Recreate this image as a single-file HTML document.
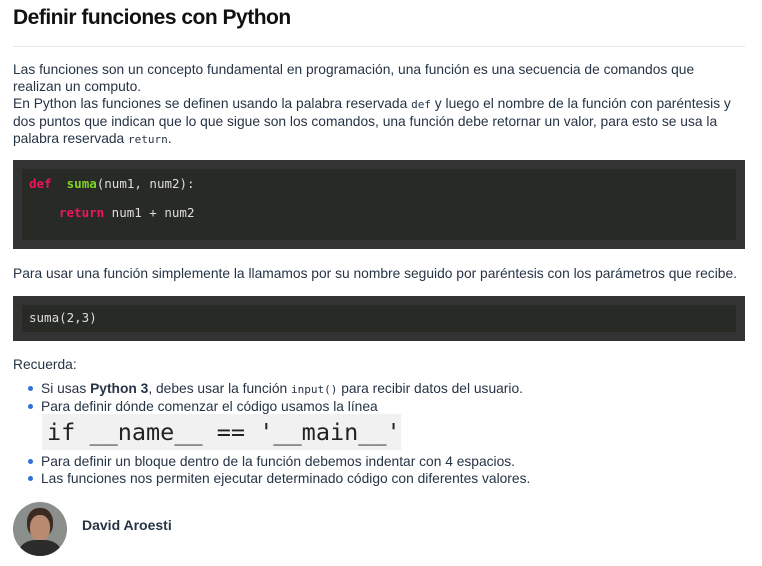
<!DOCTYPE html>
<html><head><style>
body{margin:0;width:762px;height:566px;background:#fff;font-family:"Liberation Sans",sans-serif;color:#263445;overflow:hidden;position:relative}
.a{position:absolute}
p{margin:0;font-size:13.8px;line-height:17px}
code{font-family:"DejaVu Sans Mono",monospace;font-size:11px}
.box{position:absolute;left:13px;width:732px;background:#333}
.in{position:absolute;left:9px;right:9px;background:#282a26;font-family:"DejaVu Sans Mono",monospace;font-size:12.5px;color:#ddd}
.k{color:#f0145a;font-weight:bold}.f{color:#7fd324;font-weight:bold}
li{font-size:13.8px;line-height:17px}
ul{margin:0;padding:0;list-style:none}
li:before{content:"";display:inline-block;width:5px;height:5px;border-radius:50%;background:#2f6fd8;margin:0 8px 2px 0;vertical-align:middle}
</style></head><body>
<div class="a" style="left:13px;top:6px;font-size:21px;font-weight:bold;color:#111;letter-spacing:-0.5px">Definir funciones con Python</div>
<div class="a" style="left:13px;top:46px;width:732px;height:1px;background:#e6e6e6"></div>
<p class="a" style="left:13px;top:61px;width:732px">Las funciones son un concepto fundamental en programación, una función es una secuencia de comandos que<br>realizan un computo.<br>En Python las funciones se definen usando la palabra reservada <code>def</code> y luego el nombre de la función con paréntesis y<br>dos puntos que indican que lo que sigue son los comandos, una función debe retornar un valor, para esto se usa la<br>palabra reservada <code>return</code>.</p>
<div class="box" style="top:160px;height:89px"><div class="in" style="top:9px;height:71px">
<div class="a" style="left:7px;top:7px;white-space:pre"><span class="k">def</span>  <span class="f">suma</span>(num1, num2):</div>
<div class="a" style="left:37px;top:36px;white-space:pre"><span class="k">return</span> num1 + num2</div>
</div></div>
<p class="a" style="left:13px;top:265px;white-space:nowrap">Para usar una función simplemente la llamamos por su nombre seguido por paréntesis con los parámetros que recibe.</p>
<div class="box" style="top:296px;height:45px"><div class="in" style="top:9px;height:27px">
<div class="a" style="left:7px;top:5px">suma(2,3)</div></div></div>
<p class="a" style="left:13px;top:356px">Recuerda:</p>
<ul class="a" style="left:28px;top:380px;white-space:nowrap">
<li>Si usas <b>Python 3</b>, debes usar la función <code>input()</code> para recibir datos del usuario.</li>
<li>Para definir dónde comenzar el código usamos la línea</li>
</ul>
<div class="a" style="left:42px;top:414px;width:359px;height:36px;background:#f1f1f1;font-family:'DejaVu Sans Mono',monospace;font-size:23.5px;line-height:36px;color:#222;padding-left:5px;box-sizing:border-box;white-space:pre">if __name__ == '__main__'</div>
<ul class="a" style="left:28px;top:453px;white-space:nowrap">
<li>Para definir un bloque dentro de la función debemos indentar con 4 espacios.</li>
<li>Las funciones nos permiten ejecutar determinado código con diferentes valores.</li>
</ul>
<div class="a" style="left:13px;top:502px;width:54px;height:54px;border-radius:50%;overflow:hidden;background:#8a8f8c">
<div class="a" style="left:14px;top:6px;width:26px;height:30px;border-radius:45%;background:#3a2a22"></div>
<div class="a" style="left:17px;top:13px;width:20px;height:26px;border-radius:45%;background:#b88a70"></div>
<div class="a" style="left:6px;top:38px;width:42px;height:30px;border-radius:40%;background:#2b2b2b"></div>
</div>
<div class="a" style="left:82px;top:517px;font-size:14px;font-weight:bold;color:#263445">David Aroesti</div>
</body></html>
